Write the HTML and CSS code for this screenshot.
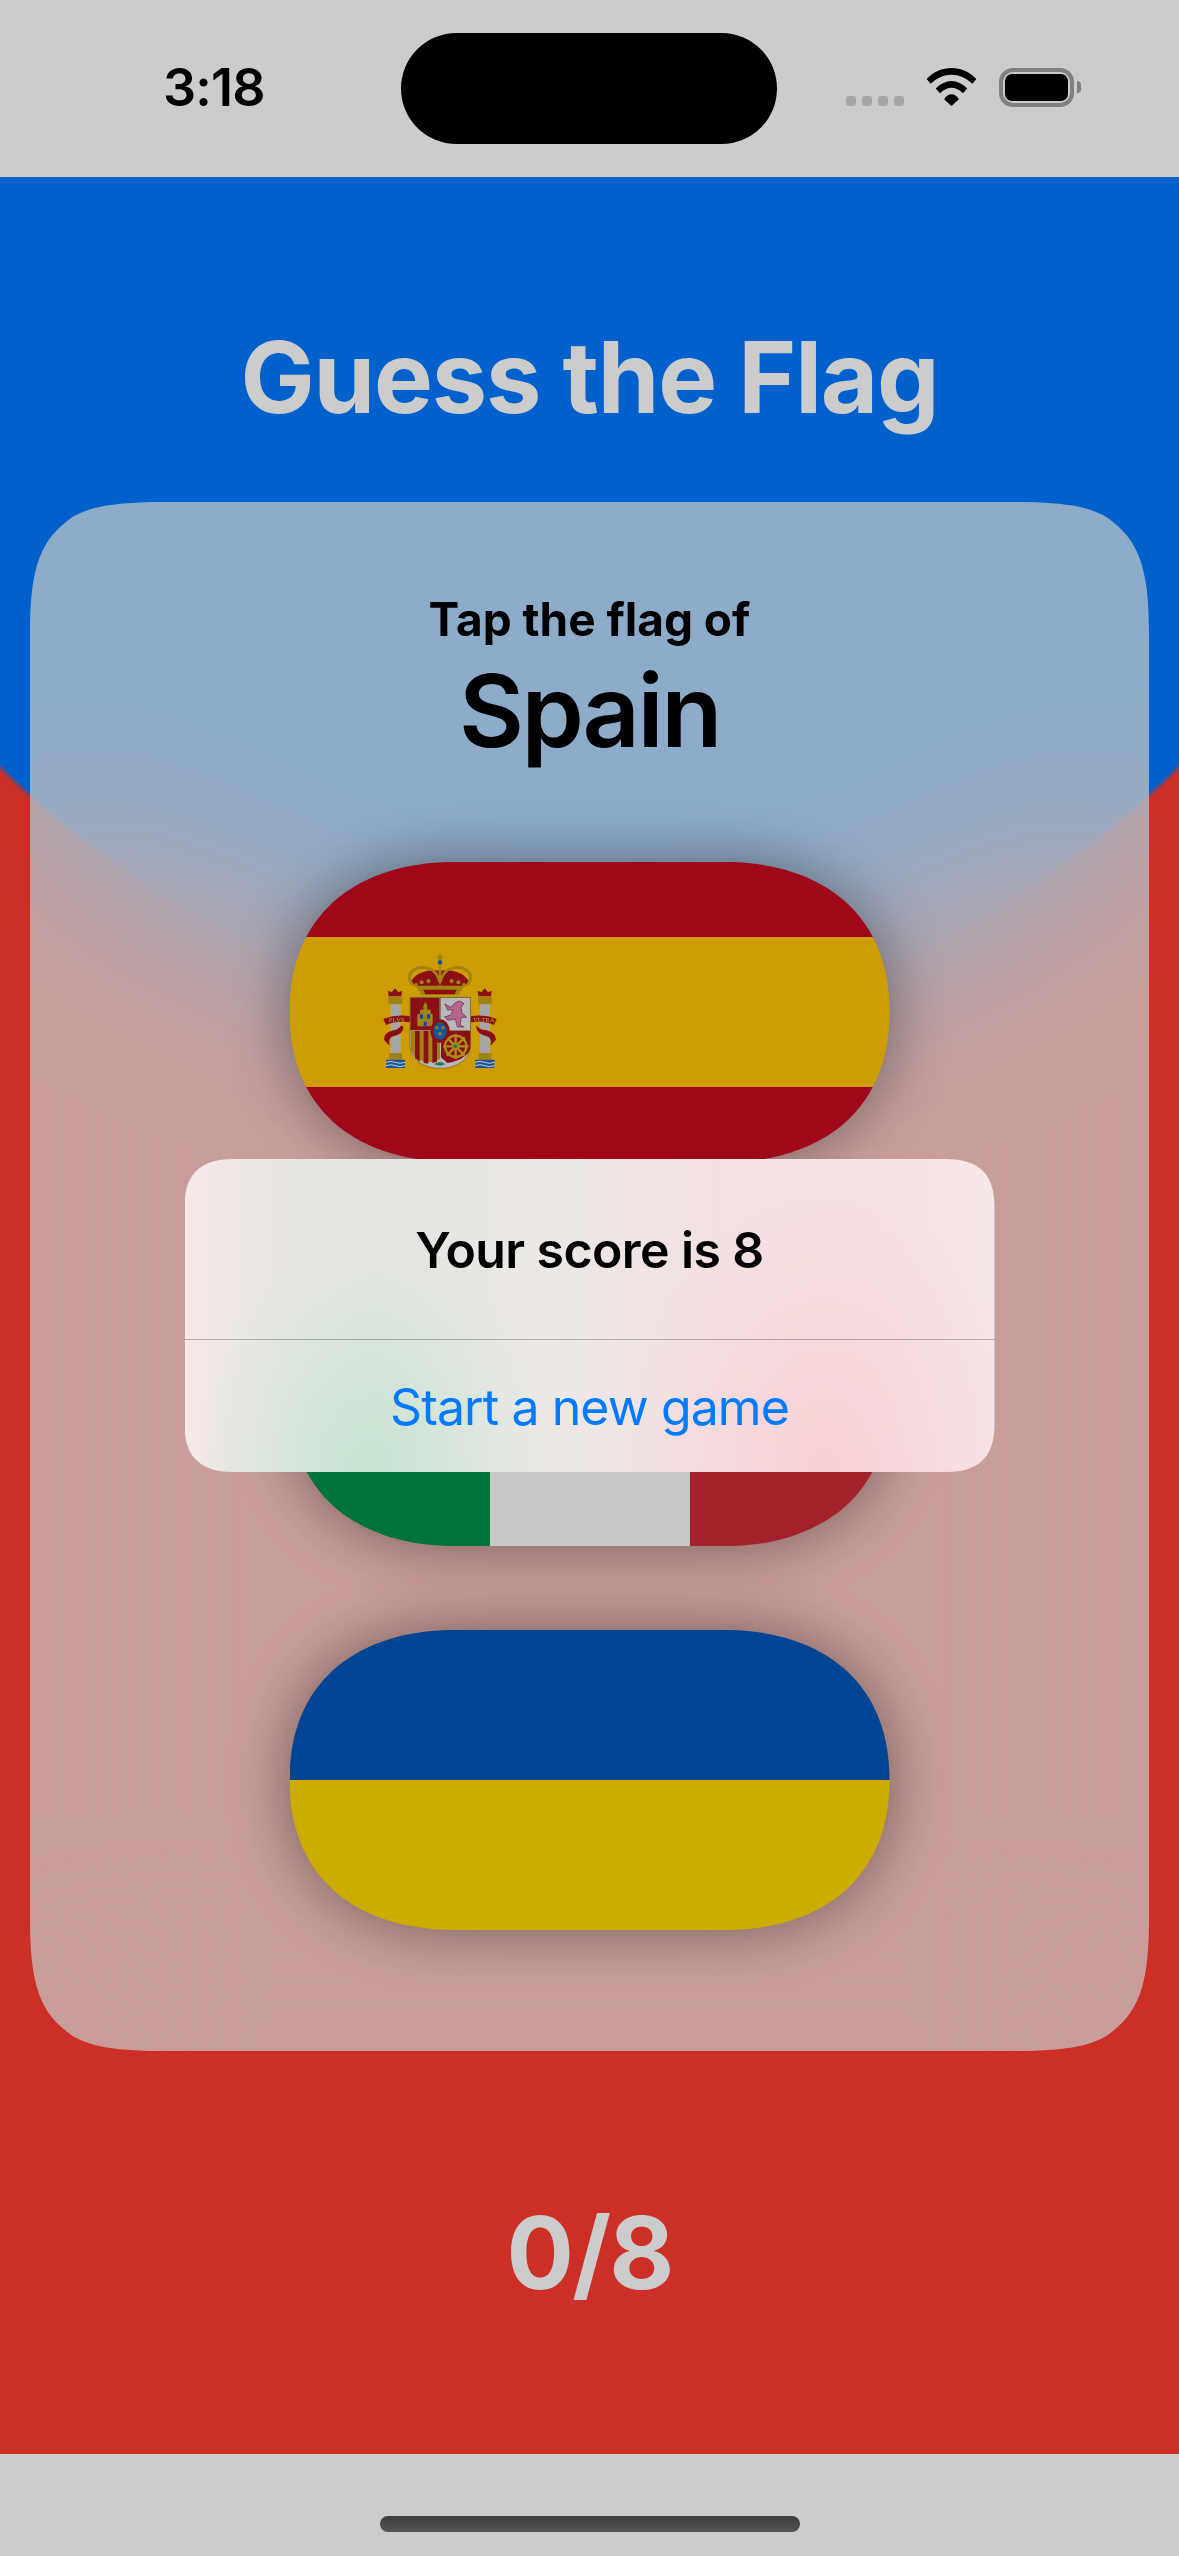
FILE: index.html
```html
<!DOCTYPE html>
<html lang="en">
<head>
  <meta charset="UTF-8">
  <title>Guess the Flag</title>
  <link rel="stylesheet" href="styles.css">
</head>
<body>
  <div class="screen">
    <header class="status-bar">
      <div class="time">3:18</div>
      <div class="island"></div>
      <div class="status-icons">
        <div class="signal"><span></span><span></span><span></span><span></span></div>
        <svg class="wifi" viewBox="0 0 152 113">
          <path d="M2,33 C42,-11 110,-11 150,33 L138,47 C100,11 52,11 14,47 Z"/>
          <path d="M29,61 C58,31 94,31 123,61 L110,75 C88,53 64,53 42,75 Z"/>
          <path d="M54,93 C66,73 86,73 98,93 L76,113 Z"/>
        </svg>
        <div class="battery"><div class="battery-level"></div></div>
        <div class="battery-nub"></div>
      </div>
    </header>

    <main class="game">
      <h1 class="title">Guess the Flag</h1>

      <section class="card">
        <p class="prompt">Tap the flag of</p>
        <p class="country">Spain</p>

        <div class="flags">
          <div class="flag-shadow">
            <div class="flag flag-spain">
              <div class="band-red"></div>
              <div class="band-yellow">
                <svg class="emblem" viewBox="0 0 450 450">
                  <!-- pillars -->
                  <g id="pillar-left">
                    <path class="red" d="M86,172 L84,155 L95,160 L105,148 L115,160 L126,155 L124,172 Z"/>
                    <rect class="gold" x="85" y="174" width="42" height="22"/>
                    <rect class="stone" x="92" y="196" width="30" height="148"/>
                    <rect class="gold" x="88" y="342" width="38" height="20"/>
                    <rect class="blue" x="78" y="362" width="57" height="25"/>
                    <path class="wave" d="M78,370 Q92,364 106,370 T135,370 M78,380 Q92,374 106,380 T135,380"/>
                  </g>
                  <g id="pillar-right">
                    <path class="red" d="M355,172 L353,155 L364,160 L374,148 L384,160 L395,155 L393,172 Z"/>
                    <rect class="gold" x="354" y="174" width="42" height="22"/>
                    <rect class="stone" x="360" y="196" width="30" height="148"/>
                    <rect class="gold" x="356" y="342" width="38" height="20"/>
                    <rect class="blue" x="346" y="362" width="57" height="25"/>
                    <path class="wave" d="M346,370 Q360,364 374,370 T403,370 M346,380 Q360,374 374,380 T403,380"/>
                  </g>
                  <!-- ribbons -->
                  <path class="red" d="M70,240 Q110,225 150,232 L150,250 Q110,245 78,258 Z"/>
                  <path class="red" d="M130,262 Q132,285 100,292 Q84,296 88,320 L72,302 Q70,282 100,274 Q118,270 122,260 Z"/>
                  <path class="red" d="M332,232 Q372,225 410,240 L402,258 Q372,245 332,250 Z"/>
                  <path class="red" d="M350,260 Q354,270 380,274 Q408,282 408,302 L392,320 Q396,296 380,292 Q350,285 348,262 Z"/>
                  <text class="motto" x="110" y="249">PLVS</text>
                  <text class="motto" x="371" y="249">VLTRA</text>
                  <!-- crown -->
                  <path class="red" d="M152,132 C160,100 215,88 240,96 C265,88 320,100 328,132 L300,148 L180,148 Z"/>
                  <path class="crown-line" d="M158,138 C130,100 170,78 205,88 C222,93 234,110 240,128 C246,110 258,93 275,88 C310,78 350,100 322,138"/>
                  <path class="crown-line" d="M240,128 L240,70"/>
                  <path class="crown-line" d="M232,55 L248,55 M240,46 L240,66"/>
                  <circle class="blue" cx="240" cy="70" r="7"/>
                  <path class="gold" d="M168,140 L312,140 L296,168 L184,168 Z"/>
                  <path class="red" d="M190,152 L290,152 L284,166 L196,166 Z"/>
                  <g class="gold">
                    <circle cx="168" cy="138" r="6"/><circle cx="185" cy="130" r="6"/><circle cx="205" cy="126" r="6"/>
                    <circle cx="240" cy="124" r="7"/><circle cx="275" cy="126" r="6"/><circle cx="295" cy="130" r="6"/>
                    <circle cx="312" cy="138" r="6"/>
                  </g>
                  <!-- shield -->
                  <path class="silver" d="M150,175 L331,175 L331,320 C331,360 290,388 240,388 C190,388 150,360 150,320 Z"/>
                  <rect class="red" x="151" y="176" width="88" height="98"/>
                  <rect class="silver" x="241" y="176" width="90" height="98"/>
                  <path class="gold" d="M152,276 L240,276 L240,360 C215,378 165,372 152,330 Z"/>
                  <path class="red" d="M165,276 H179 V368 L165,356 Z M191,276 H205 V374 L191,372 Z M217,276 H231 V368 L217,372 Z"/>
                  <path class="red" d="M243,276 L331,276 L331,325 C331,345 300,368 262,372 L243,355 Z"/>
                  <path class="chain" d="M287,285 V360 M250,322 H325 M260,295 L314,350 M314,295 L260,350"/>
                  <circle class="chain" cx="287" cy="322" r="32"/>
                  <circle class="green" cx="286" cy="322" r="6"/>
                  <path class="green" d="M222,376 Q240,362 256,376 L240,380 Z"/>
                  <!-- castle -->
                  <path class="gold" d="M172,262 L172,225 L180,225 L180,212 L190,212 L190,200 L196,188 L202,200 L202,212 L212,212 L212,225 L218,225 L218,262 Z"/>
                  <rect class="blue-bright" x="180" y="226" width="9" height="13"/>
                  <rect class="blue-bright" x="201" y="226" width="9" height="13"/>
                  <rect class="blue-bright" x="191" y="248" width="9" height="14"/>
                  <!-- lion -->
                  <path class="lion" d="M255,195 L272,205 L288,190 L300,186 L312,194 L303,204 L306,222 L320,235 L304,235 L300,258 L312,264 L292,264 L286,240 L264,244 L254,234 L272,228 L280,214 L262,212 Z"/>
                  <!-- centre oval -->
                  <ellipse class="red" cx="240" cy="276" rx="29" ry="35"/>
                  <ellipse class="blue" cx="240" cy="276" rx="20" ry="26"/>
                  <g class="gold">
                    <circle cx="231" cy="266" r="4.5"/><circle cx="249" cy="266" r="4.5"/><circle cx="240" cy="284" r="5"/>
                  </g>
                </svg>
              </div>
              <div class="band-red"></div>
            </div>
          </div>

          <div class="flag-shadow">
            <div class="flag flag-italy">
              <div class="band-green"></div>
              <div class="band-white"></div>
              <div class="band-crimson"></div>
            </div>
          </div>

          <div class="flag-shadow">
            <div class="flag flag-ukraine">
              <div class="band-azure"></div>
              <div class="band-sun"></div>
            </div>
          </div>
        </div>
      </section>

      <p class="score">0/8</p>
    </main>

    <footer class="home-bar">
      <div class="home-indicator"></div>
    </footer>

    <div class="dim">
      <div class="alert">
        <div class="alert-title">Your score is 8</div>
        <div class="alert-action">Start a new game</div>
      </div>
    </div>
  </div>
</body>
</html>
```

FILE: styles.css
```css
body {
  margin: 0;
  font-family: Inter, "Noto Sans", sans-serif;
  background: #fff;
}
p, h1 {
  margin: 0;
}

.screen {
  position: relative;
  width: 1179px;
  height: 2556px;
  overflow: hidden;
  display: flex;
  flex-direction: column;
}

/* status bar */
.status-bar {
  height: 177px;
  flex: none;
  display: grid;
  grid-template-columns: 401px 376px 1fr;
  background: #fff;
  color: #000;
}
.time {
  padding: 57px 0 0 163px;
  font-size: 52px;
  line-height: 62px;
  font-weight: 600;
  letter-spacing: -0.8px;
}
.island {
  height: 111px;
  margin-top: 33px;
  border-radius: 56px;
  background: #000;
}
.status-icons {
  display: flex;
  align-items: flex-start;
  padding: 68px 0 0 69px;
}
.signal {
  display: flex;
  gap: 6px;
  margin-top: 28px;
}
.signal span {
  width: 10px;
  height: 10px;
  border-radius: 3px;
  background: #cfcfcf;
}
.wifi {
  width: 51px;
  height: 38px;
  margin-left: 22px;
  fill: #000;
}
.battery {
  box-sizing: border-box;
  width: 75px;
  height: 39px;
  margin-left: 22px;
  padding: 2px;
  border: 4px solid #a0a0a0;
  border-radius: 14px;
}
.battery-level {
  height: 100%;
  border-radius: 7px;
  background: #000;
}
.battery-nub {
  width: 4px;
  height: 12px;
  margin: 13px 0 0 3px;
  border-radius: 0 6px 6px 0;
  background: #a0a0a0;
}

/* game area */
.game {
  flex: 1;
  display: flex;
  flex-direction: column;
  align-items: center;
  background: radial-gradient(circle at 50% 0, #007aff 831px, #ff3b30 837px);
}
.title {
  margin-top: 140px;
  height: 185px;
  font-size: 99px;
  line-height: 120px;
  font-weight: 700;
  letter-spacing: -1.2px;
  color: #fff;
}

/* clip-path gives the continuous corners */
.card {
  box-sizing: border-box;
  width: 1119px;
  height: 1549px;
  padding-top: 90px;
  text-align: center;
  color: #000;
  background: rgba(250, 255, 252, 0.71);
  -webkit-backdrop-filter: blur(100px);
  backdrop-filter: blur(100px);
  clip-path: path("M0,132 C0,72 8,42 36,20 C52,6 80,0 132,0 L987,0 C1039,0 1067,6 1083,20 C1111,42 1119,72 1119,132 L1119,1417 C1119,1477 1111,1507 1083,1529 C1067,1543 1039,1549 987,1549 L132,1549 C80,1549 52,1543 36,1529 C8,1507 0,1477 0,1417 Z");
}
.prompt {
  font-size: 46px;
  line-height: 54px;
  font-weight: 700;
}
.country {
  margin-top: 4px;
  font-size: 100px;
  line-height: 122px;
  font-weight: 600;
  letter-spacing: -2.4px;
}

.flags {
  display: flex;
  flex-direction: column;
  align-items: center;
  gap: 84px;
  margin-top: 90px;
}
.flag-shadow {
  filter: drop-shadow(0 0 30px rgba(0, 0, 0, 0.42));
}
.flag {
  width: 600px;
  height: 300px;
  display: flex;
  clip-path: path("M0,150 C0,43 78,0 165,0 L435,0 C522,0 600,43 600,150 C600,257 522,300 435,300 L165,300 C78,300 0,257 0,150 Z");
}
.flag-spain, .flag-ukraine {
  flex-direction: column;
}

.band-red {
  height: 75px;
  background: #c60b1e;
}
.band-yellow {
  height: 150px;
  padding-left: 70px;
  display: flex;
  align-items: flex-start;
  background: #ffc400;
}
.band-green, .band-white, .band-crimson {
  width: 200px;
}
.band-green { background: #009246; }
.band-white { background: #fbfbfb; }
.band-crimson { background: #ce2b37; }
.band-azure, .band-sun {
  height: 150px;
}
.band-azure { background: #0057b8; }
.band-sun { background: #ffd700; }

.emblem {
  width: 150px;
  height: 150px;
  margin-top: 2px;
  filter: blur(0.3px);
}
.emblem .red { fill: #ad1519; }
.emblem .gold { fill: #c8a41a; }
.emblem .stone { fill: #d0d0d0; }
.emblem .silver { fill: #e6e6e6; stroke: #8a7a30; stroke-width: 2; }
.emblem .blue { fill: #1f6fc0; }
.emblem .blue-bright { fill: #1a4fe0; }
.emblem .green { fill: #2a9a6a; }
.emblem .lion { fill: #e87fb0; stroke: #6a2a50; stroke-width: 2; }
.emblem .wave { fill: none; stroke: #fff; stroke-width: 3; }
.emblem .crown-line { fill: none; stroke: #c8a41a; stroke-width: 8; }
.emblem .chain { fill: none; stroke: #d8b020; stroke-width: 7; }
.emblem .motto {
  font-family: "Liberation Serif", serif;
  font-size: 20px;
  text-anchor: middle;
  fill: #e8c840;
}

.score {
  margin-top: 140px;
  font-size: 100px;
  line-height: 124px;
  font-weight: 700;
  letter-spacing: -1.8px;
  color: #fff;
}

.home-bar {
  height: 102px;
  flex: none;
  display: flex;
  justify-content: center;
  background: #fff;
}
.home-indicator {
  width: 420px;
  height: 16px;
  margin-top: 62px;
  border-radius: 8px;
  background: linear-gradient(#4c4c4c, #6a6a6a);
}

/* alert sits on top of the whole screen */
.dim {
  position: absolute;
  inset: 0;
  box-sizing: border-box;
  padding: 177px 0 102px;
  display: flex;
  align-items: center;
  justify-content: center;
  background: rgba(0, 0, 0, 0.2);
}
/* the glow of the flag behind is painted as gradients, a real blur stays too sharp */
.alert {
  width: 810px;
  text-align: center;
  background:
    radial-gradient(ellipse 175px 235px at 183px 313px, #c6e3d2, rgba(198, 227, 210, 0)),
    radial-gradient(ellipse 210px 290px at 640px 313px, #f5d0d5, rgba(245, 208, 213, 0)),
    linear-gradient(90deg, #f6e9e8, #eae7e3 83px, #e5e5df 194px, #ebe8e6 360px, #f4e2e2 530px, #f6e2e3 690px, #f6e7e7);
  clip-path: path("M0,50 C0,30 4,18 14,10 C22,3 34,0 50,0 L760,0 C776,0 788,3 796,10 C806,18 810,30 810,50 L810,263 C810,283 806,295 796,303 C788,310 776,313 760,313 L50,313 C34,313 22,310 14,303 C4,295 0,283 0,263 Z");
}
.alert-title {
  height: 180px;
  padding-top: 60px;
  box-sizing: border-box;
  font-size: 50px;
  line-height: 62px;
  font-weight: 600;
  letter-spacing: -0.6px;
  color: #000;
}
.alert-action {
  height: 133px;
  padding-top: 36px;
  box-sizing: border-box;
  border-top: 1px solid rgba(60, 60, 67, 0.36);
  font-size: 50px;
  line-height: 62px;
  letter-spacing: -0.9px;
  color: #007aff;
}
```
